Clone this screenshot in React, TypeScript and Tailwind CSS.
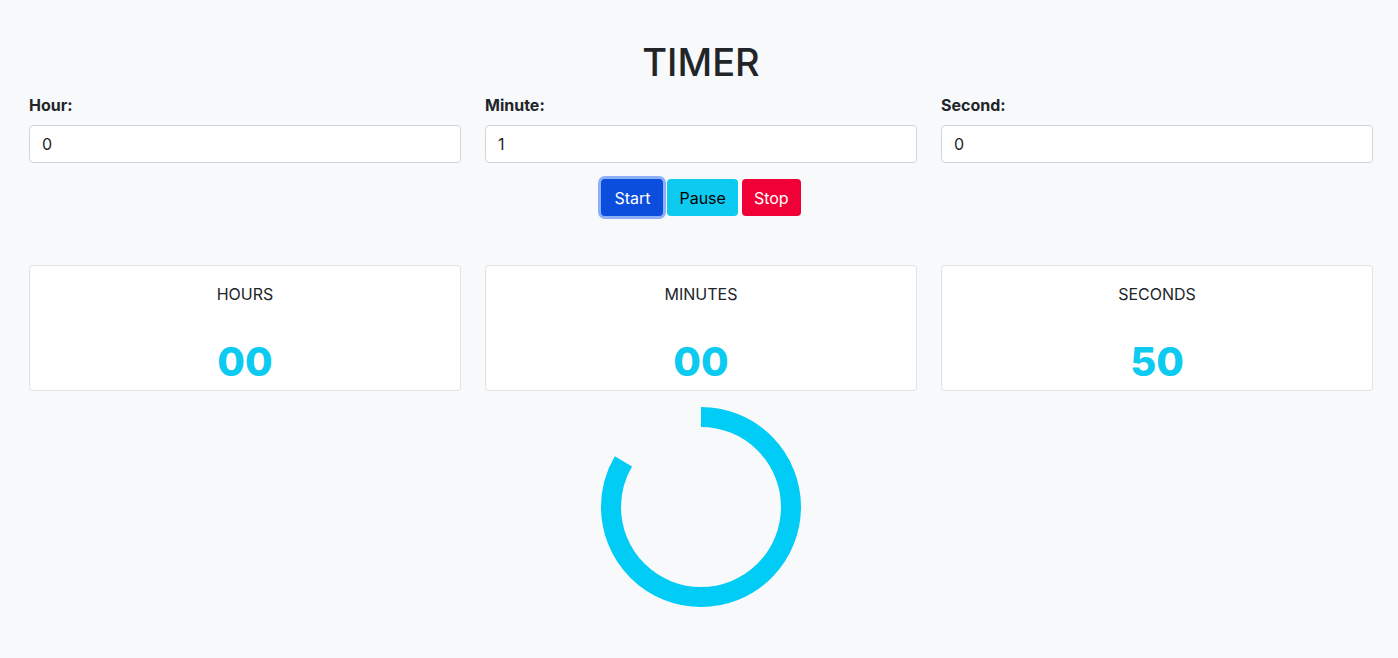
import React from "react";

const font = { fontFamily: "Inter, 'Noto Sans', 'Liberation Sans', sans-serif" };

function Field({ label, value }: { label: string; value: string }) {
  return (
    <div className="flex flex-col">
      <label className="text-[16px] font-bold text-[#212529] leading-6 mb-2">{label}</label>
      <input
        readOnly
        value={value}
        className="h-[38px] w-full rounded-[4px] border border-[#ced4da] bg-white px-3 text-[16px] text-[#212529] outline-none"
      />
    </div>
  );
}

function Card({ label, value }: { label: string; value: string }) {
  return (
    <div className="flex h-[126px] flex-col items-center rounded-[4px] border border-[#dfe1e5] bg-white">
      <div className="mt-[16px] text-[16px] leading-6 text-[#212529]">{label}</div>
      <div className="mt-[32px] text-[40px] font-extrabold leading-[48px] text-[#0dcaf0]">{value}</div>
    </div>
  );
}

export default function App() {
  const r = 90;
  const c = 2 * Math.PI * r;
  const frac = 50 / 60;
  return (
    <div className="min-h-[658px] bg-[#f8f9fa] pl-[29px] pr-[25px]" style={font}>
      <h1 className="pt-[39px] text-center text-[38px] font-medium leading-[46px] text-[#212529]">TIMER</h1>
      <div className="mt-[8px] grid grid-cols-3 gap-x-6">
        <Field label="Hour:" value="0" />
        <Field label="Minute:" value="1" />
        <Field label="Second:" value="0" />
      </div>
      <div className="mt-[16px] flex justify-center gap-1">
        <button className="h-[37px] rounded-[4px] bg-[#0b4ddc] px-[13px] text-[16px] text-white ring-[3px] ring-[#8cb0f5]">Start</button>
        <button className="h-[37px] rounded-[4px] bg-[#0dcaf0] px-3 text-[16px] text-black">Pause</button>
        <button className="h-[37px] rounded-[4px] bg-[#ef0037] px-3 text-[16px] text-white">Stop</button>
      </div>
      <div className="mt-[49px] grid grid-cols-3 gap-x-6">
        <Card label="HOURS" value="00" />
        <Card label="MINUTES" value="00" />
        <Card label="SECONDS" value="50" />
      </div>
      <div className="mt-[16px] flex justify-center">
        <svg width="200" height="200" viewBox="0 0 200 200">
          <circle
            cx="100"
            cy="100"
            r={r}
            fill="none"
            stroke="#00ccf5"
            strokeWidth="20"
            strokeDasharray={`${c * frac} ${c}`}
            transform="rotate(-90 100 100)"
          />
        </svg>
      </div>
    </div>
  );
}
